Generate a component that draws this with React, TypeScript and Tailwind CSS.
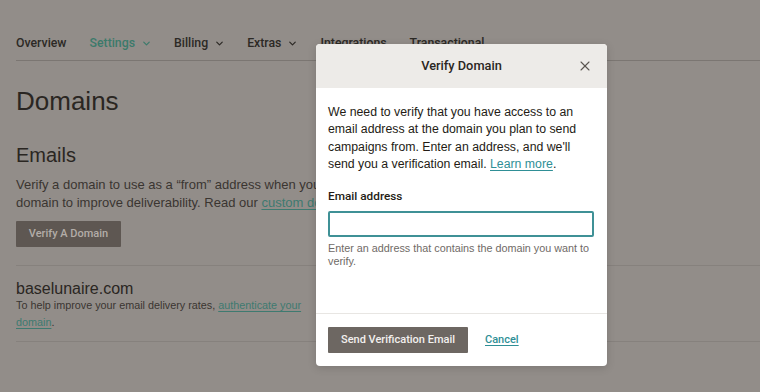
import { X, ChevronDown } from "lucide-react";

const navItems = [
  { label: "Overview", menu: false, active: false },
  { label: "Settings", menu: true, active: true },
  { label: "Billing", menu: true, active: false },
  { label: "Extras", menu: true, active: false },
  { label: "Integrations", menu: false, active: false },
  { label: "Transactional", menu: false, active: false },
];

const medium = { fontFamily: "Roboto, 'Liberation Sans', sans-serif" };

function VerifyModal() {
  return (
    <div className="absolute left-[316px] top-[44px] w-[291px] h-[322px] bg-white rounded-[4px] overflow-hidden shadow-[0_2px_8px_rgba(0,0,0,0.15)] flex flex-col">
      <div className="relative h-[44px] shrink-0 bg-[#edebe8] flex items-center justify-center">
        <h2 className="text-[12.8px] font-medium text-[#2a2622]" style={medium}>
          Verify Domain
        </h2>
        <button className="absolute right-[14px] top-[14px] text-[#5c5752]">
          <X size={16} strokeWidth={1.6} />
        </button>
      </div>
      <div className="flex-1 px-[12px] pt-[16px]">
        <p className="text-[12.3px] leading-[17.4px] text-[#241c15]">
          We need to verify that you have access to an email address at the domain you plan to send
          campaigns from. Enter an address, and we'll send you a verification email.{" "}
          <a className="text-[#2f8f96] underline underline-offset-2 decoration-1">Learn more</a>.
        </p>
        <label className="block mt-[14px] text-[11.8px] font-medium text-[#241c15]" style={medium}>
          Email address
        </label>
        <input className="mt-[6px] block w-[266px] h-[26px] border-2 border-[#3f9196] rounded-[2px] outline-none px-2 text-[12px]" />
        <p className="mt-[5px] text-[10.8px] leading-[13px] text-[#6f6a66]">
          Enter an address that contains the domain you want to verify.
        </p>
      </div>
      <div className="h-[53px] shrink-0 border-t border-[#e8e6e3] px-[12px] flex items-center gap-[17px]">
        <button
          className="h-[26px] w-[140px] bg-[#6d6762] text-[#f2f0ee] text-[11px] font-medium rounded-[1px]"
          style={medium}
        >
          Send Verification Email
        </button>
        <a className="text-[11px] font-medium text-[#2f8f96] underline underline-offset-2" style={medium}>
          Cancel
        </a>
      </div>
    </div>
  );
}

export default function App() {
  return (
    <div
      className="relative w-[760px] h-[392px] overflow-hidden bg-[#928d89] text-[#2a2622]"
      style={{ fontFamily: "'Liberation Sans', Arial, sans-serif" }}
    >
      <div className="pl-[16px]">
        <nav className="h-[61px] flex items-end pb-[8px] border-b border-[#7b7672]" style={medium}>
          {navItems.map((item) => (
            <div
              key={item.label}
              className={`flex items-center text-[12.3px] font-medium ${item.menu ? "mr-[22px]" : "mr-[23px]"} ${item.active ? "text-[#3c7a6b]" : "text-[#2c2925]"}`}
            >
              {item.label}
              {item.menu && <ChevronDown size={11} strokeWidth={2.6} className="ml-[6px] mt-[1px]" />}
            </div>
          ))}
        </nav>

        <h1 className="mt-[24px] text-[26px] leading-[32px] text-[#2a2622]">Domains</h1>

        <h2 className="mt-[25px] text-[20px] leading-[26px] text-[#2a2622]">Emails</h2>
        <p className="mt-[8px] w-[300px] whitespace-nowrap text-[13px] leading-[17.5px] text-[#3a3531]">
          Verify a domain to use as a “from” address when you send
          <br />
          domain to improve deliverability. Read our{" "}
          <span className="text-[#3e7a70] underline underline-offset-2">custom domain</span>
        </p>
        <button
          className="mt-[10px] h-[26px] w-[105px] bg-[#5e5752] text-[#b3ada8] text-[11px] font-medium rounded-[1px]"
          style={medium}
        >
          Verify A Domain
        </button>

        <div className="mt-[18px] border-t border-[#86817d]" />
        <div className="pt-[14px] pb-[10px] border-b border-[#86817d]">
          <div className="text-[16px] leading-[17px] text-[#2a2622]">baselunaire.com</div>
          <p className="w-[300px] text-[10.8px] leading-[17px] text-[#3a3531]">
            To help improve your email delivery rates,{" "}
            <span className="text-[#3e7a70] underline underline-offset-2">authenticate your domain</span>.
          </p>
        </div>
      </div>

      <VerifyModal />
    </div>
  );
}
